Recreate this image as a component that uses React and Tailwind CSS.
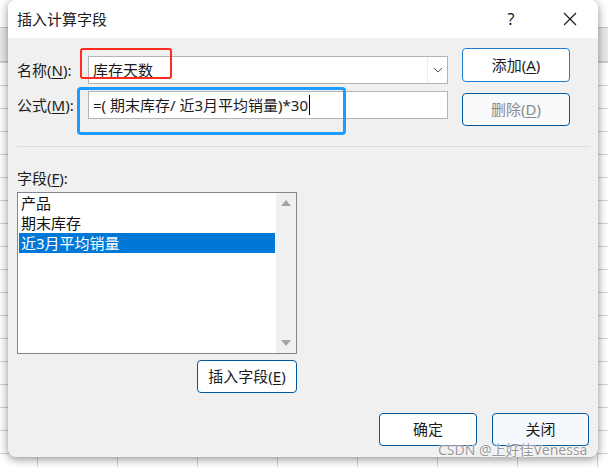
import React from 'react';

const font = "font-['Noto_Sans','Noto_Sans_CJK_SC',sans-serif]";

function Mn({ children }) {
  return <span className="underline underline-offset-2 decoration-1">{children}</span>;
}

function Button({ children, className = '', disabled = false }) {
  return (
    <div
      className={`flex items-center justify-center rounded-[4px] border text-[15px] ${
        disabled ? 'text-[#8a8a8a]' : 'text-[#1b1b1b]'
      } ${className}`}
    >
      {children}
    </div>
  );
}

const fields = ['产品', '期末库存', '近3月平均销量'];

export default function App() {
  return (
    <div className={`relative w-[608px] h-[467px] overflow-hidden bg-white ${font}`}>
      {/* spreadsheet behind the dialog */}
      <div className="absolute inset-0 flex flex-col">
        <div className="h-[27px] bg-white" />
        <div className="h-[35px] bg-[#e9e9e9] border-y border-[#c8c8c8]" />
        <div className="flex-1 bg-white bg-[linear-gradient(#d2d2d2_1px,transparent_1px),linear-gradient(90deg,#d2d2d2_1px,transparent_1px)] bg-size-[80px_23px] bg-position-[37px_0px]" />
      </div>

      {/* dialog */}
      <div className="absolute left-[8px] top-0 w-[590px] h-[457px] rounded-[8px] bg-[#f0f0f0] shadow-[0_2px_10px_rgba(0,0,0,0.45)] flex flex-col overflow-hidden text-[#1b1b1b]">
        <div className="h-[38px] shrink-0 bg-white flex items-center pl-[9px]">
          <span className="text-[15px]">插入计算字段</span>
          <span className="ml-auto text-[16px] w-[14px] text-center mr-[45px]">?</span>
          <svg width="14" height="14" viewBox="0 0 14 14" className="mr-[21px]">
            <path d="M1 1L13 13M13 1L1 13" stroke="#1b1b1b" strokeWidth="1.2" />
          </svg>
        </div>

        <div className="flex-1 flex flex-col pl-[9px] pr-[8px]">
          <div className="h-[108px] shrink-0 flex">
            <div className="w-[431px] pt-[18px] flex flex-col gap-[7px]">
              <div className="flex items-center h-[28px]">
                <span className="w-[71px] text-[15px]">
                  名称(<Mn>N</Mn>):
                </span>
                <div className="w-[360px] h-[28px] bg-white border border-[#b4b4b4] flex items-center">
                  <span className="pl-[4px] text-[15px] flex-1">库存天数</span>
                  <div className="w-[20px] h-full border-l border-[#ececec] flex items-center justify-center">
                    <svg width="10" height="6" viewBox="0 0 10 6">
                      <path d="M1 1L5 5L9 1" fill="none" stroke="#555" strokeWidth="1" />
                    </svg>
                  </div>
                </div>
              </div>
              <div className="flex items-center h-[28px]">
                <span className="w-[71px] text-[15px]">
                  公式(<Mn>M</Mn>):
                </span>
                <div className="w-[360px] h-[28px] bg-white border border-[#b4b4b4] flex items-center">
                  <span className="pl-[4px] text-[15px]">=( 期末库存/ 近3月平均销量)*30</span>
                  <span className="w-[1px] h-[20px] bg-black ml-[1px]" />
                </div>
              </div>
            </div>
            <div className="ml-[14px] pt-[10px] flex flex-col gap-[11px]">
              <Button className="w-[108px] h-[34px] bg-white border-[#1a7fd4]">
                添加(<Mn>A</Mn>)
              </Button>
              <Button disabled className="w-[108px] h-[33px] bg-[#f8fafc] border-[#00579e]">
                删除(<Mn>D</Mn>)
              </Button>
            </div>
          </div>

          <div className="h-px w-[573px] bg-[#dcdcdc]" />

          <div className="mt-[21px] h-[20px] leading-[20px] text-[15px]">
            字段(<Mn>F</Mn>):
          </div>

          <div className="w-[280px] flex flex-col items-end mt-[4px]">
            <div className="w-[280px] h-[162px] bg-white border border-[#82878f] flex">
              <div className="flex-1 pl-[1px] pr-[1px] flex flex-col">
                {fields.map((f, i) => (
                  <div
                    key={f}
                    className={`h-[20px] leading-[20px] pl-[2px] text-[15px] ${
                      i === 2 ? 'bg-[#0078d7] text-white' : 'text-[#111]'
                    }`}
                  >
                    {f}
                  </div>
                ))}
              </div>
              <div className="w-[20px] bg-[#f0f0f0] flex flex-col items-center justify-between py-[7px]">
                <svg width="10" height="6" viewBox="0 0 10 6">
                  <path d="M5 0L10 6H0Z" fill="#a3a3a3" />
                </svg>
                <svg width="10" height="6" viewBox="0 0 10 6">
                  <path d="M0 0H10L5 6Z" fill="#a3a3a3" />
                </svg>
              </div>
            </div>
            <Button className="mt-[6px] w-[100px] h-[33px] bg-white border-[#00579e]">
              插入字段(<Mn>E</Mn>)
            </Button>
          </div>

          <div className="mt-[20px] flex justify-end gap-[15px] pr-[1px]">
            <Button className="w-[98px] h-[33px] bg-white border-[#00579e]">确定</Button>
            <Button className="w-[97px] h-[33px] bg-[#f5f9fd] border-[#00579e]">关闭</Button>
          </div>
        </div>
      </div>

      {/* annotation boxes */}
      <div className="absolute left-[80px] top-[48px] w-[92px] h-[31px] border-2 border-[#ff2b1c] rounded-[3px]" />
      <div className="absolute left-[77px] top-[87px] w-[269px] h-[48px] border-[3px] border-[#1e9bff] rounded-[4px]" />

      {/* watermark */}
      <div className="absolute left-[438px] top-[441px] text-[14px] leading-[18px] text-[#999999] [text-shadow:0_0_2px_#fff,0_0_2px_#fff]">
        CSDN @上好佳Venessa
      </div>
    </div>
  );
}
